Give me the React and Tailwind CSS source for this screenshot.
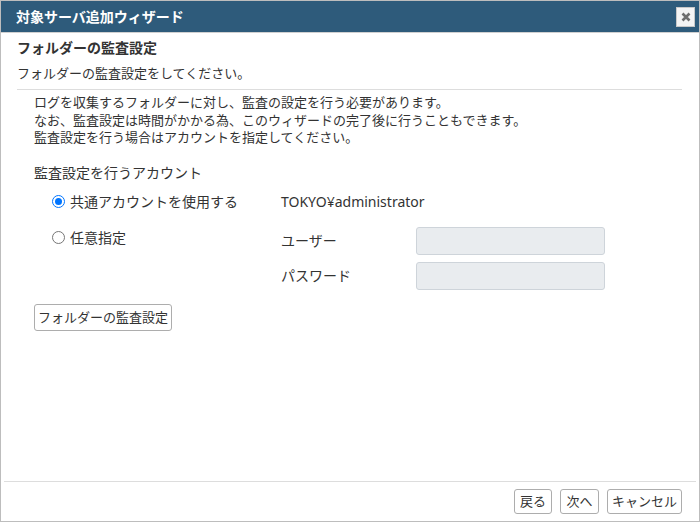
import React from 'react';

const font = { fontFamily: '"Noto Sans", "Noto Sans CJK JP", sans-serif' };

const Radio = ({ checked }) => (
    <span className={`inline-flex w-[13px] h-[13px] rounded-full border items-center justify-center mr-[5px] ${checked ? 'border-[#0075ff]' : 'border-[#767676]'}`}>
        {checked && <span className="w-[7px] h-[7px] rounded-full bg-[#0075ff]"></span>}
    </span>
);

const Btn = ({ children, className = '' }) => (
    <button className={`h-[25px] border border-[#adadad] rounded-[3px] bg-white text-[13px] text-[#333] leading-none flex items-center justify-center whitespace-nowrap ${className}`}>
        {children}
    </button>
);

export default function App() {
    return (
        <div className="w-[700px] h-[522px] bg-white border border-[#bdbdbd] flex flex-col text-[#333]" style={font}>
            {/* title bar */}
            <div className="h-[32px] bg-[#2e5b7b] flex items-center justify-between pl-[15px] pr-[4px] border-b border-[#d0d0d0]">
                <span className="text-white font-bold text-[14px]">対象サーバ追加ウィザード</span>
                <span className="w-[19px] h-[20px] bg-[#f4f4f4] border border-[#c8c8c8] flex items-center justify-center">
                    <svg width="10" height="10" viewBox="0 0 10 10">
                        <path d="M1.5 1.5 L8.5 8.5 M8.5 1.5 L1.5 8.5" stroke="#6e6e6e" strokeWidth="2.6" />
                    </svg>
                </span>
            </div>

            <div className="flex-1 flex flex-col px-[16px]">
                <div className="pt-[4px] text-[14px] font-bold leading-[22px]">フォルダーの監査設定</div>
                <div className="text-[13px] leading-[20px] mt-[4px]">フォルダーの監査設定をしてください。</div>
                <div className="border-b border-[#dddddd] mt-[6px] mr-[1px]"></div>

                <div className="pl-[17px] pt-[4px] text-[13px] leading-[17.5px]">
                    <p>ログを収集するフォルダーに対し、監査の設定を行う必要があります。</p>
                    <p>なお、監査設定は時間がかかる為、このウィザードの完了後に行うこともできます。</p>
                    <p>監査設定を行う場合はアカウントを指定してください。</p>
                </div>

                <div className="pl-[17px] mt-[16px] text-[14px] leading-[20px]">監査設定を行うアカウント</div>

                <div className="pl-[35px] mt-[9px] flex text-[14px]">
                    <div className="w-[229px] flex flex-col">
                        <label className="flex items-center h-[20px]"><Radio checked />共通アカウントを使用する</label>
                        <label className="flex items-center h-[20px] mt-[16px]"><Radio />任意指定</label>
                    </div>
                    <div className="flex flex-col">
                        <div className="h-[20px] flex items-center">TOKYO¥administrator</div>
                        <div className="flex items-center mt-[15px]">
                            <span className="w-[135px]">ユーザー</span>
                            <div className="w-[189px] h-[28px] bg-[#e9ecef] border border-[#ced4da] rounded-[3px]"></div>
                        </div>
                        <div className="flex items-center mt-[7px]">
                            <span className="w-[135px]">パスワード</span>
                            <div className="w-[189px] h-[28px] bg-[#e9ecef] border border-[#ced4da] rounded-[3px]"></div>
                        </div>
                    </div>
                </div>

                <div className="pl-[17px] mt-[14px]">
                    <Btn className="h-[27px] w-[138px]">フォルダーの監査設定</Btn>
                </div>
            </div>

            <div className="border-t border-[#dddddd] mx-[3px] h-[40px] flex items-center justify-end gap-[8px] pr-[14px]">
                <Btn className="w-[38px]">戻る</Btn>
                <Btn className="w-[39px]">次へ</Btn>
                <Btn className="w-[75px]">キャンセル</Btn>
            </div>
        </div>
    );
}
